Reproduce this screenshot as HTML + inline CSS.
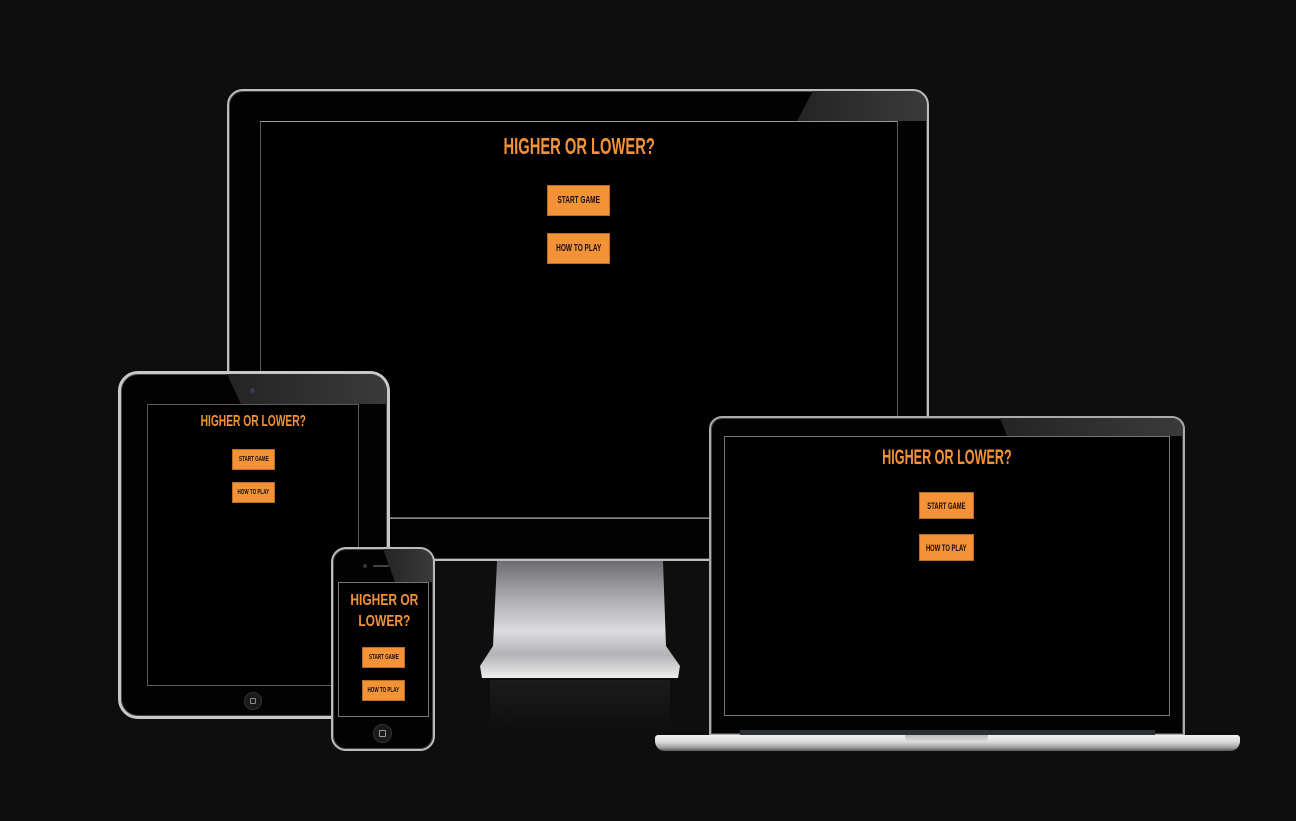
<!DOCTYPE html>
<html><head><style>
*{margin:0;padding:0;box-sizing:border-box}
body{width:1296px;height:821px;background:#0f0e0f;position:relative;overflow:hidden;font-family:"Liberation Sans",sans-serif}
.a{position:absolute}
.frame{position:absolute;background:#020202;border:2px solid #bdbdbd;box-shadow:inset 0 0 0 1px #444}
.glare{position:absolute;background:linear-gradient(90deg,#242424,#3a3a3a)}
.scr{position:absolute;background:#000;border:1px solid #5a5a5a;overflow:hidden}
.t{position:absolute;left:0;right:0;text-align:center;color:#f39237;font-weight:bold;white-space:nowrap}
.t span{display:inline-block;transform:scaleX(.64)}
.b{position:absolute;background:#f39237;color:#111;font-weight:bold;display:flex;align-items:center;justify-content:center;white-space:nowrap;border:1px solid #b86d24}
.b span{display:inline-block;transform:scaleX(.65)}
</style></head><body>

<!-- monitor -->
<div class="frame" style="left:227px;top:89px;width:702px;height:472px;border-radius:16px 16px 2px 2px"></div>
<div class="glare" style="left:797px;top:91px;width:129px;height:30px;clip-path:polygon(16px 0,100% 0,100% 100%,0 100%);border-radius:0 14px 0 0"></div>
<div class="a" style="left:229px;top:517px;width:698px;height:2px;background:#8a8a8a"></div>
<div class="scr" style="left:260px;top:121px;width:638px;height:397px;border-top-color:#9a9a9a">
 <div class="t" style="top:11px;font-size:23px"><span>HIGHER OR LOWER?</span></div>
 <div class="b" style="left:286px;top:63px;width:63px;height:31px;font-size:10px"><span>START GAME</span></div>
 <div class="b" style="left:286px;top:111px;width:63px;height:31px;font-size:10px"><span>HOW TO PLAY</span></div>
</div>
<!-- stand -->
<div class="a" style="left:480px;top:561px;width:200px;height:117px;background:linear-gradient(180deg,#6d6d70 0%,#a9a9ad 30%,#dcdcdf 60%,#b3b3b6 80%,#eee 100%);clip-path:polygon(17px 0,183px 0,186px 85px,200px 105px,198px 117px,2px 117px,0 105px,13px 85px)"></div>
<div class="a" style="left:490px;top:680px;width:180px;height:50px;background:linear-gradient(#1c1c1d,#0f0e0f)"></div>

<!-- tablet -->
<div class="frame" style="left:118px;top:371px;width:272px;height:348px;border-radius:20px;border-width:3px;border-color:#c8c8c8"></div>
<div class="glare" style="left:227px;top:374px;width:160px;height:30px;clip-path:polygon(0 0,100% 0,100% 100%,14px 100%);border-radius:0 17px 0 0"></div>
<div class="a" style="left:250px;top:388px;width:5px;height:5px;border-radius:50%;background:#3a3a55"></div>
<div class="scr" style="left:147px;top:404px;width:212px;height:282px">
 <div class="t" style="top:8px;font-size:16px"><span>HIGHER OR LOWER?</span></div>
 <div class="b" style="left:84px;top:44px;width:43px;height:21px;font-size:7px"><span>START GAME</span></div>
 <div class="b" style="left:84px;top:77px;width:43px;height:21px;font-size:7px"><span>HOW TO PLAY</span></div>
</div>
<div class="a" style="left:244px;top:692px;width:18px;height:18px;border-radius:50%;background:#1a1a1a;border:1px solid #333"></div>
<div class="a" style="left:250px;top:698px;width:6px;height:6px;border:1px solid #888;border-radius:1px"></div>

<!-- phone -->
<div class="frame" style="left:331px;top:547px;width:104px;height:204px;border-radius:15px;border-color:#bbb"></div>
<div class="glare" style="left:383px;top:549px;width:49px;height:33px;clip-path:polygon(0 0,100% 0,100% 100%,12px 100%);border-radius:0 13px 0 0"></div>
<div class="a" style="left:363px;top:564px;width:4px;height:4px;border-radius:50%;background:#334"></div>
<div class="a" style="left:373px;top:565px;width:16px;height:2px;border-radius:1px;background:#444"></div>
<div class="scr" style="left:338px;top:582px;width:91px;height:135px;border-color:#777">
 <div class="t" style="top:7px;font-size:16px;line-height:21px"><span style="transform:scaleX(.75)">HIGHER OR<br>LOWER?</span></div>
 <div class="b" style="left:23px;top:64px;width:43px;height:21px;font-size:7px"><span>START GAME</span></div>
 <div class="b" style="left:23px;top:97px;width:43px;height:21px;font-size:7px"><span>HOW TO PLAY</span></div>
</div>
<div class="a" style="left:373px;top:724px;width:19px;height:19px;border-radius:50%;background:#1a1a1a;border:1px solid #333"></div>
<div class="a" style="left:379px;top:730px;width:7px;height:7px;border:1px solid #999;border-radius:1px"></div>

<!-- laptop -->
<div class="frame" style="left:709px;top:416px;width:476px;height:320px;border-radius:13px 13px 0 0;border-color:#aaa"></div>
<div class="glare" style="left:1000px;top:418px;width:182px;height:18px;clip-path:polygon(0 0,100% 0,100% 100%,7px 100%);border-radius:0 11px 0 0"></div>
<div class="scr" style="left:724px;top:436px;width:446px;height:280px;border-color:#777">
 <div class="t" style="top:9px;font-size:21px"><span style="transform:scaleX(.6)">HIGHER OR LOWER?</span></div>
 <div class="b" style="left:194px;top:55px;width:55px;height:27px;font-size:9px"><span>START GAME</span></div>
 <div class="b" style="left:194px;top:97px;width:55px;height:27px;font-size:9px"><span>HOW TO PLAY</span></div>
</div>
<div class="a" style="left:740px;top:730px;width:415px;height:5px;background:#2b2e33"></div>
<div class="a" style="left:655px;top:735px;width:585px;height:16px;border-radius:3px 3px 10px 10px;background:linear-gradient(#f2f2f2 0%,#d8d8d8 45%,#9a9a9a 80%,#555 100%)"></div>
<div class="a" style="left:905px;top:735px;width:83px;height:7px;border-radius:0 0 6px 6px;background:linear-gradient(#bbb,#ddd)"></div>
</body></html>
